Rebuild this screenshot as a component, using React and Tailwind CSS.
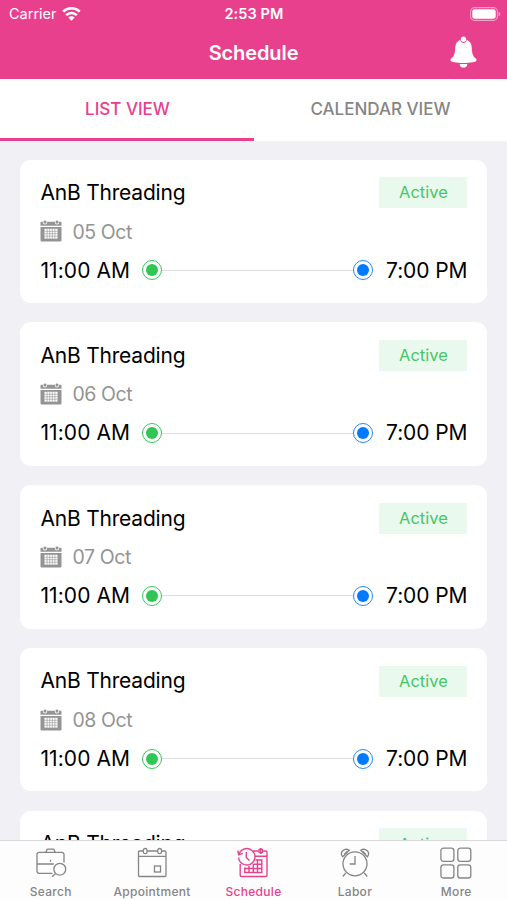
import React, { useState } from "react";

const shifts = [
  { id: 1, shop: "AnB Threading", date: "05 Oct", start: "11:00 AM", end: "7:00 PM" },
  { id: 2, shop: "AnB Threading", date: "06 Oct", start: "11:00 AM", end: "7:00 PM" },
  { id: 3, shop: "AnB Threading", date: "07 Oct", start: "11:00 AM", end: "7:00 PM" },
  { id: 4, shop: "AnB Threading", date: "08 Oct", start: "11:00 AM", end: "7:00 PM" },
  { id: 5, shop: "AnB Threading", date: "09 Oct", start: "11:00 AM", end: "7:00 PM" },
];

/* ---------- Icons ---------- */
function WifiIcon() {
  return (
    <svg className="ml-[5px] h-[14px] w-[19px]" viewBox="0 0 19 14" fill="none" stroke="white" strokeWidth="2.5">
      <path d="M1.2 4.7a11.8 11.8 0 0 1 16.6 0" />
      <path d="M4.2 8.1a7.5 7.5 0 0 1 10.6 0" />
      <path d="M9.5 13.8 6.3 10.6a4.5 4.5 0 0 1 6.4 0z" fill="white" stroke="none" />
    </svg>
  );
}

function BatteryIcon() {
  return (
    <svg className="h-[14px] w-[31px]" viewBox="0 0 31 14">
      <rect x="0.6" y="0.6" width="26.8" height="12.8" rx="4" fill="none" stroke="white" strokeOpacity="0.5" strokeWidth="1.1" />
      <rect x="2.3" y="2.3" width="23.4" height="9.4" rx="2.3" fill="white" />
      <path d="M28.7 4.7c2 .8 2 3.8 0 4.6z" fill="white" fillOpacity="0.6" />
    </svg>
  );
}

function BellIcon() {
  return (
    <svg className="h-8 w-[27px]" viewBox="0 0 27 32" fill="white">
      <circle cx="13.5" cy="3.2" r="2.7" />
      <path d="M8.3 4.9c1-.7 1.7-.9 2-.9.3 1.9 1.5 3 3.2 3s2.9-1.1 3.2-3c.3 0 1 .2 2 .9 2.7 1.8 2.9 4.6 3.1 7.8.3 5 1.2 7.5 3.7 9.6.8.7 1.1 1.3 1 2.1-.2 1.5-5.8 2.5-13 2.5S.7 25.9.5 24.4c-.1-.8.2-1.4 1-2.1 2.5-2.1 3.4-4.6 3.7-9.6.2-3.2.4-6 3.1-7.8z" />
      <path d="M9.7 27.9c2.5.2 5.1.2 7.6 0 0 2.2-1.6 3.7-3.8 3.7s-3.8-1.5-3.8-3.7z" />
    </svg>
  );
}

function DateIcon() {
  return (
    <svg className="h-[22px] w-[22px]" viewBox="0 0 22 22">
      <path d="M.5 2.5Q.5 1.8 1.2 1.8H20.8Q21.5 1.8 21.5 2.5V5.8H.5zM.5 7H21.5V20.6Q21.5 21.4 20.7 21.4H1.3Q.5 21.4.5 20.6z" fill="#949494" />
      <path d="M2.9 1.6v.8a2.1 2.1 0 0 0 4.2 0v-.8zM14.9 1.6v.8a2.1 2.1 0 0 0 4.2 0v-.8z" fill="white" />
      <rect x="3.7" y="0.4" width="2.6" height="3.2" rx="1.2" fill="#949494" />
      <rect x="15.7" y="0.4" width="2.6" height="3.2" rx="1.2" fill="#949494" />
      <path d="M4.5 8.8h13v9.8h-13z" fill="white" />
      <path d="M4.5 11.3h13M4.5 13.7h13M4.5 16.2h13M7.1 8.8v9.8M9.7 8.8v9.8M12.3 8.8v9.8M14.9 8.8v9.8" stroke="#949494" strokeWidth="0.6" />
    </svg>
  );
}

function SearchIcon() {
  return (
    <svg className="h-8 w-8" viewBox="0 0 32 32" fill="none" stroke="currentColor" strokeWidth="1.3">
      <path d="M17.5 26.3H4.3Q2 26.3 2 24V7.6Q2 5.3 4.3 5.3H26.7Q29 5.3 29 7.6V15.5" />
      <path d="M11 5.3l.7-2.3q.3-.9 1.2-.9h5.2q.9 0 1.2.9l.7 2.3M2 17H18.8M15.5 12.8v2" />
      <circle cx="24.8" cy="22.2" r="5.9" />
      <path d="m20.6 26.5-3.6 3.3" />
    </svg>
  );
}

function AppointmentIcon() {
  return (
    <svg className="h-8 w-8" viewBox="0 0 32 32" fill="none" stroke="currentColor" strokeWidth="1.3">
      <path d="M7.3 4H3.7Q2.5 4 2.5 5.2V28.3Q2.5 29.5 3.7 29.5H28.8Q30 29.5 30 28.3V5.2Q30 4 28.8 4H25.5M11 4H21.8M2.5 9.3H30" />
      <rect x="7.3" y="1.5" width="3.7" height="5.2" rx="1.8" />
      <rect x="21.8" y="1.5" width="3.7" height="5.2" rx="1.8" />
      <rect x="18.5" y="19" width="6" height="6" />
    </svg>
  );
}

function ScheduleIcon() {
  return (
    <svg className="h-8 w-8" viewBox="0 0 32 32" fill="none" stroke="currentColor" strokeWidth="1.4">
      <path d="M3.2 17V28.2Q3.2 29.5 4.6 29.5H28.6Q30 29.5 30 28.2V5.2Q30 4 28.8 4H26.3M21.3 4H16M18 9.3H30" />
      <path d="M1.9 7.5A8.2 8.2 0 1 1 1.6 10.5M.8 3.5l.9 4.3 4.2-1.4" />
      <path d="M9.3 5v5.5l3.2 3" />
      <circle cx="23.8" cy="4" r="2" />
      <path d="M23.8 1v6" />
      <path d="M7.8 20.2v5.3H24.8V13H18.5M7.8 21.5H24.8M17 17.2H24.8M12 19v6.5M16.3 17v8.5M20.5 13v12.5" />
    </svg>
  );
}

function LaborIcon() {
  return (
    <svg className="h-8 w-8" viewBox="0 0 32 32" fill="none" stroke="currentColor" strokeWidth="1.3">
      <circle cx="16" cy="16.8" r="12" />
      <path d="M16 9v8h-5.3M6.8 25.8l-3 3.7M25.2 25.8l3 3.7" />
      <path d="M3.6 9.8C.2 5.5 5.3.3 10.3 3.2zM5.3 7.3l3-3" />
      <path d="M28.4 9.8c3.4-4.3-1.7-9.5-6.7-6.6zM26.7 7.3l-3-3" />
    </svg>
  );
}

function MoreIcon() {
  return (
    <svg className="h-8 w-8" viewBox="0 0 32 32" fill="none" stroke="currentColor" strokeWidth="1.3">
      <rect x="0.9" y="1.1" width="13" height="13.2" rx="2.6" />
      <rect x="17.8" y="1.1" width="13" height="13.2" rx="2.6" />
      <rect x="0.9" y="17.8" width="13" height="13.2" rx="2.6" />
      <rect x="17.8" y="17.8" width="13" height="13.2" rx="2.6" />
    </svg>
  );
}

const navItems = [
  { label: "Search", Icon: SearchIcon },
  { label: "Appointment", Icon: AppointmentIcon },
  { label: "Schedule", Icon: ScheduleIcon },
  { label: "Labor", Icon: LaborIcon },
  { label: "More", Icon: MoreIcon },
];

/* ---------- Shift Card ---------- */
function ShiftCard({ shift }) {
  return (
    <div className="h-[143.5px] shrink-0 rounded-[11px] bg-white px-5 pt-[17.8px]">
      <div className="flex h-[31px] items-center justify-between">
        <h2 className="text-[21px] tracking-[-0.2px] text-black">{shift.shop}</h2>
        <span className="flex h-[31px] w-[88px] items-center justify-center bg-[#eaf9ee] text-[16.5px] text-[#45c766]">
          Active
        </span>
      </div>

      <div className="mt-[11px] flex h-6 items-center gap-[10px]">
        <DateIcon />
        <span className="mt-[2px] text-[19.5px] tracking-[-0.4px] text-[#949494]">{shift.date}</span>
      </div>

      <div className="mt-[15px] flex h-6 items-center justify-between whitespace-nowrap">
        <span className="w-[101.5px] text-[21px] tracking-[0.1px] text-black">{shift.start}</span>
        <span className="flex h-5 w-5 shrink-0 items-center justify-center rounded-full border-[1.5px] border-[#34c759]">
          <span className="h-3 w-3 rounded-full bg-[#30c653]" />
        </span>
        <span className="h-px flex-1 bg-[#dededf]" />
        <span className="flex h-5 w-5 shrink-0 items-center justify-center rounded-full border-[1.5px] border-[#2b86f5]">
          <span className="h-3 w-3 rounded-full bg-[#007aff]" />
        </span>
        <span className="w-[94px] text-right text-[21px] tracking-[-0.1px] text-black">{shift.end}</span>
      </div>
    </div>
  );
}

export default function App() {
  const [view, setView] = useState("list");
  const [active, setActive] = useState("Schedule");

  return (
    <div className="flex h-[900px] w-[507px] flex-col overflow-hidden bg-[#f0f0f5] font-['Inter',sans-serif]">
      {/* Header */}
      <header className="h-[79px] shrink-0 bg-[#e8408d] text-white">
        <div className="grid h-[27px] grid-cols-3 items-center pr-[6px] pl-[7px]">
          <div className="flex items-center pl-[2px] text-[14.5px]">
            Carrier
            <WifiIcon />
          </div>
          <p className="text-center text-[14.5px] font-semibold tracking-[0.1px]">2:53 PM</p>
          <div className="flex justify-end">
            <BatteryIcon />
          </div>
        </div>
        <div className="grid h-[52px] grid-cols-3 items-center px-[30px]">
          <span />
          <h1 className="text-center text-[20px] font-semibold tracking-[-0.1px]">Schedule</h1>
          <button className="-mt-[3px] flex justify-end">
            <BellIcon />
          </button>
        </div>
      </header>

      {/* View Tabs */}
      <div className="flex h-[61.5px] shrink-0 bg-white text-[17px] font-medium">
        <button
          onClick={() => setView("list")}
          className={`flex-1 border-b-[3px] pt-[3px] pl-px ${view === "list" ? "border-[#e8408d] text-[#e8408d]" : "border-white text-[#858585]"}`}
        >
          LIST VIEW
        </button>
        <button
          onClick={() => setView("calendar")}
          className={`flex-1 border-b-[3px] pt-[3px] ${view === "calendar" ? "border-[#e8408d] text-[#e8408d]" : "border-white text-[#858585]"}`}
        >
          CALENDAR VIEW
        </button>
      </div>

      {/* Shifts */}
      <main className="flex min-h-0 flex-1 flex-col gap-[19.3px] overflow-hidden pt-[19px] pr-[19.6px] pl-[20.4px]">
        {shifts.map((shift) => (
          <ShiftCard key={shift.id} shift={shift} />
        ))}
      </main>

      {/* Bottom Nav */}
      <nav className="grid h-[60px] shrink-0 grid-cols-5 border-t border-[#d8d8da] bg-[#fdfdfd]">
        {navItems.map(({ label, Icon }) => (
          <button
            key={label}
            onClick={() => setActive(label)}
            className={`flex flex-col items-center pt-[6px] ${active === label ? "text-[#e8408d]" : "text-[#858585]"}`}
          >
            <Icon />
            <span className="mt-[3.5px] text-[12px] leading-[18px] font-medium tracking-[0.3px]">{label}</span>
          </button>
        ))}
      </nav>
    </div>
  );
}
